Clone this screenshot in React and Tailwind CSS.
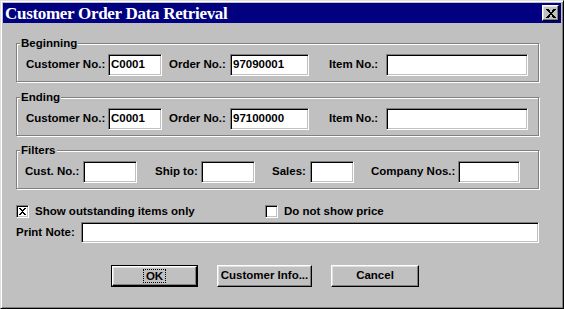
import React from "react";

const sunken =
  "bg-white border border-t-[#808080] border-l-[#808080] border-r-white border-b-white shadow-[inset_1px_1px_#000,inset_-1px_-1px_#c0c0c0]";
const raised =
  "bg-[#c0c0c0] border border-t-white border-l-white border-r-black border-b-black shadow-[inset_-1px_-1px_#808080,inset_1px_1px_#dfdfdf]";
const etched =
  "relative border border-[#808080] shadow-[1px_1px_#fff,inset_1px_1px_#fff]";

function Field({ w, value, h = "h-[22px]" }) {
  return (
    <div className={`${sunken} ${w} ${h} flex items-center pl-[2px] shrink-0`}>
      <span className="leading-none">{value}</span>
    </div>
  );
}

function Label({ w, pl = "", children }) {
  return (
    <div className={`${w} ${pl} shrink-0 whitespace-nowrap`}>{children}</div>
  );
}

function Group({ title, children, mt }) {
  return (
    <div className={`${etched} ${mt} h-[39px] pt-[10px]`}>
      <div className="absolute -top-[8px] left-[3px] bg-[#c0c0c0] px-[1px] leading-[14px]">
        {title}
      </div>
      {children}
    </div>
  );
}

function Check({ checked }) {
  return (
    <div className={`${sunken} w-[13px] h-[13px] shrink-0 flex items-center justify-center`}>
      {checked && (
        <svg width="7" height="7" viewBox="0 0 7 7" shapeRendering="crispEdges">
          <path d="M0 0h2v1h-2zM5 0h2v1h-2zM1 1h2v1h-2zM4 1h2v1h-2zM2 2h3v1h-3zM3 3h1v1h-1zM2 4h3v1h-3zM1 5h2v1h-2zM4 5h2v1h-2zM0 6h2v1h-2zM5 6h2v1h-2z" fill="#000" />
        </svg>
      )}
    </div>
  );
}

function Btn({ w, children, def }) {
  const inner = (
    <div className={`${raised} w-full h-full flex items-center justify-center`}>
      {children}
    </div>
  );
  if (def) {
    return (
      <div className={`${w} h-[22px] border border-black shrink-0`}>{inner}</div>
    );
  }
  return <div className={`${w} h-[22px] shrink-0`}>{inner}</div>;
}

export default function App() {
  return (
    <div
      className="w-[564px] h-[309px] bg-[#c0c0c0] border border-t-[#dfdfdf] border-l-[#dfdfdf] border-r-black border-b-black shadow-[inset_1px_1px_#fff,inset_-1px_-1px_#808080] p-[2px] flex flex-col text-black text-[11.5px] font-bold"
      style={{ fontFamily: '"Liberation Sans", Arial, sans-serif' }}
    >
      <div className="h-[20px] bg-[#000080] flex items-center justify-between pl-[2px] pr-[2px] shrink-0">
        <span
          className="text-white text-[17px] font-bold leading-none tracking-[-0.3px]"
          style={{ fontFamily: '"Liberation Serif", "Times New Roman", serif' }}
        >
          Customer Order Data Retrieval
        </span>
        <div className={`${raised} w-[17px] h-[16px] flex items-center justify-center`}>
          <svg width="10" height="9" viewBox="0 0 10 9" shapeRendering="crispEdges">
            <path d="M0 0h3v1h-3zM7 0h3v1h-3zM1 1h3v1h-3zM6 1h3v1h-3zM2 2h2v1h-2zM6 2h2v1h-2zM3 3h4v1h-4zM4 4h2v1h-2zM3 5h4v1h-4zM2 6h2v1h-2zM6 6h2v1h-2zM1 7h3v1h-3zM6 7h3v1h-3zM0 8h3v1h-3zM7 8h3v1h-3z" fill="#000" />
          </svg>
        </div>
      </div>

      <div className="flex flex-col pl-[13px] pr-[22px] pt-[20px]">
        <Group title="Beginning" mt="">
          <div className="flex items-center pl-[9px]">
            <Label w="w-[82px]">Customer No.:</Label>
            <Field w="w-[54px]" value="C0001" />
            <Label w="w-[68px]" pl="pl-[7px]">Order No.:</Label>
            <Field w="w-[79px]" value="97090001" />
            <Label w="w-[77px]" pl="pl-[20px]">Item No.:</Label>
            <Field w="w-[142px]" value="" />
          </div>
        </Group>

        <Group title="Ending" mt="mt-[15px]">
          <div className="flex items-center pl-[9px]">
            <Label w="w-[82px]">Customer No.:</Label>
            <Field w="w-[54px]" value="C0001" />
            <Label w="w-[68px]" pl="pl-[7px]">Order No.:</Label>
            <Field w="w-[79px]" value="97100000" />
            <Label w="w-[77px]" pl="pl-[20px]">Item No.:</Label>
            <Field w="w-[142px]" value="" />
          </div>
        </Group>

        <Group title="Filters" mt="mt-[14px]">
          <div className="flex items-center pl-[8px]">
            <Label w="w-[58px]">Cust. No.:</Label>
            <Field w="w-[54px]" value="" />
            <Label w="w-[64px]" pl="pl-[18px]">Ship to:</Label>
            <Field w="w-[54px]" value="" />
            <Label w="w-[55px]" pl="pl-[17px]">Sales:</Label>
            <Field w="w-[44px]" value="" />
            <Label w="w-[104px]" pl="pl-[17px]">Company Nos.:</Label>
            <Field w="w-[62px]" value="" />
          </div>
        </Group>

        <div className="flex items-center mt-[16px] h-[13px]">
          <div className="flex items-center w-[249px]">
            <Check checked />
            <span className="ml-[6px] leading-none">Show outstanding items only</span>
          </div>
          <Check />
          <span className="ml-[6px] leading-none">Do not show price</span>
        </div>

        <div className="flex items-center mt-[4px]">
          <Label w="w-[65px]">Print Note:</Label>
          <Field w="flex-1" h="h-[21px]" value="" />
        </div>

        <div className="flex items-center mt-[22px] pl-[95px] gap-[19px]">
          <Btn w="w-[87px]" def>
            <span className="outline outline-1 outline-dotted outline-black px-[2px] leading-[12px]">OK</span>
          </Btn>
          <Btn w="w-[95px]">Customer Info...</Btn>
          <Btn w="w-[88px]">Cancel</Btn>
        </div>
      </div>
    </div>
  );
}
